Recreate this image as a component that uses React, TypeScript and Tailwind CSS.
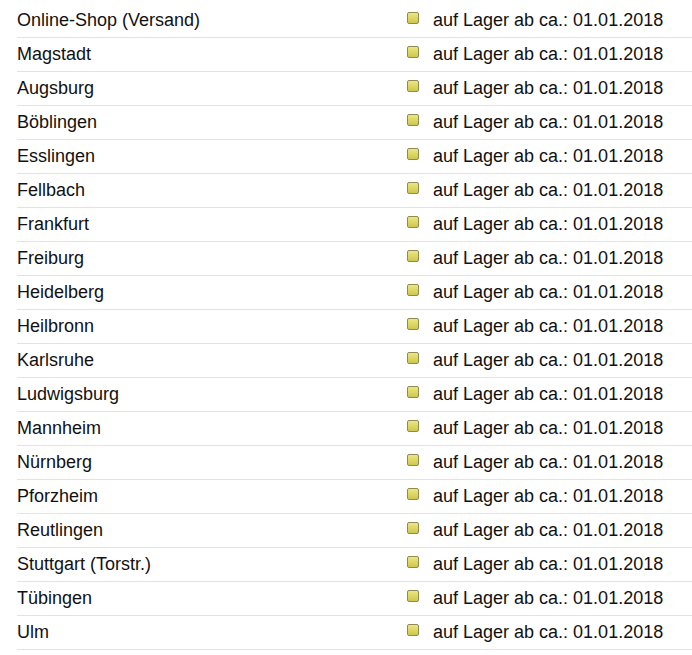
import React from "react";

const stores = [
  "Online-Shop (Versand)",
  "Magstadt",
  "Augsburg",
  "Böblingen",
  "Esslingen",
  "Fellbach",
  "Frankfurt",
  "Freiburg",
  "Heidelberg",
  "Heilbronn",
  "Karlsruhe",
  "Ludwigsburg",
  "Mannheim",
  "Nürnberg",
  "Pforzheim",
  "Reutlingen",
  "Stuttgart (Torstr.)",
  "Tübingen",
  "Ulm",
];

export default function App() {
  return (
    <div
      className="bg-white w-[692px] h-[655px] pl-[17px] pt-[4px] text-[18px] text-[#111]"
      style={{ fontFamily: '"Liberation Sans", Arial, sans-serif' }}
    >
      {stores.map((s) => (
        <div
          key={s}
          className="flex items-center h-[34px] pb-[1px] border-b border-[#e3e3e3]"
        >
          <div className="w-[390px]">{s}</div>
          <span className="w-[12px] h-[12px] mb-[4px] rounded-[2px] border border-[#8f8a55] bg-gradient-to-b from-[#ece87e] to-[#cfc64c] mr-[14px]" />
          <div>auf Lager ab ca.: 01.01.2018</div>
        </div>
      ))}
    </div>
  );
}
